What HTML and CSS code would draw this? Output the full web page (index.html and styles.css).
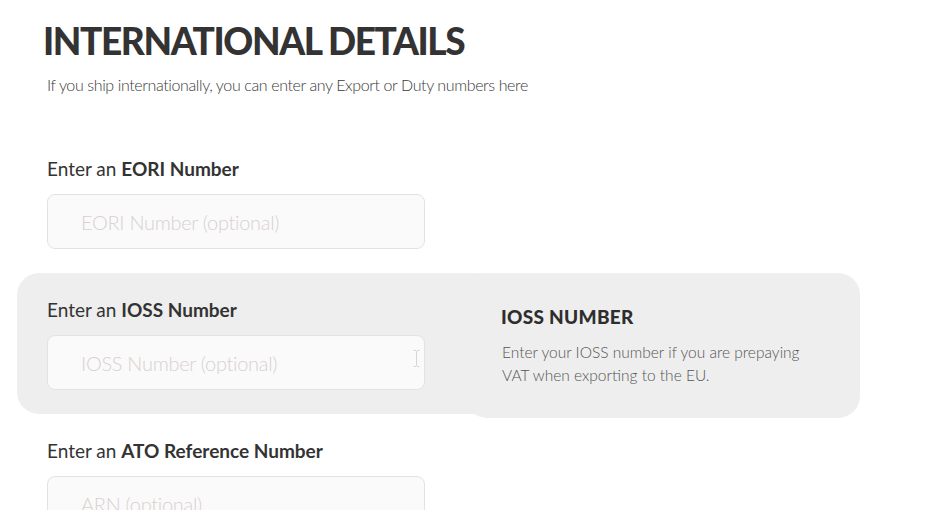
FILE: index.html
```html
<!DOCTYPE html>
<html lang="en">
<head>
<meta charset="utf-8">
<title>International Details</title>
<link rel="stylesheet" href="styles.css">
</head>
<body>
<main class="page">
  <header class="intro">
    <h1 class="title">INTERNATIONAL DETAILS</h1>
    <p class="subtitle">If you ship internationally, you can enter any Export or Duty numbers here</p>
  </header>

  <section class="fields">
    <div class="field">
      <label class="field-label" for="eori">Enter an <b>EORI Number</b></label>
      <input class="field-input" id="eori" type="text" placeholder="EORI Number (optional)">
    </div>

    <div class="field field-active">
      <label class="field-label" for="ioss">Enter an <b>IOSS Number</b></label>
      <div class="input-wrap">
        <input class="field-input" id="ioss" type="text" placeholder="IOSS Number (optional)">
        <svg class="cursor" width="7" height="17" viewBox="0 0 7 17" aria-hidden="true">
          <path d="M0.5 0.5h2.5M4 0.5h2.5M3.5 1v15M0.5 16.5h2.5M4 16.5h2.5" fill="none" stroke="#d6d6d6" stroke-width="1"/>
        </svg>
      </div>
      <aside class="tip">
        <h2 class="tip-title">IOSS NUMBER</h2>
        <p class="tip-text">Enter your IOSS number if you are prepaying VAT when exporting to the EU.</p>
      </aside>
    </div>

    <div class="field">
      <label class="field-label" for="arn">Enter an <b>ATO Reference Number</b></label>
      <input class="field-input" id="arn" type="text" placeholder="ARN (optional)">
    </div>
  </section>
</main>
</body>
</html>
```

FILE: styles.css
```css
* { box-sizing: border-box; }

html, body {
  margin: 0;
  padding: 0;
  background: #ffffff;
  height: 510px;
  overflow: hidden;
}

body {
  font-family: "Lato", "Noto Sans", sans-serif;
  color: #333333;
}

.page {
  padding-top: 19px;
}

.intro {
  padding-left: 43px;
}

.title {
  margin: 0;
  font-size: 37px;
  line-height: 44px;
  font-weight: 900;
  letter-spacing: -1.4px;
  color: #333333;
}

.subtitle {
  margin: 12px 0 0 4px;
  font-size: 16px;
  line-height: 20px;
  font-weight: 300;
  letter-spacing: -0.38px;
  color: #3a3a3a;
}

.fields {
  margin-top: 37px;
  margin-left: 17px;
  width: 843px;
  position: relative;
}

.field {
  position: relative;
  width: 470px;
  padding: 25px 30px 24px 30px;
  border-radius: 22px 0 0 22px;
}

.field-active {
  background: #eeeeee;
}

.field-label {
  display: block;
  font-size: 19px;
  line-height: 24px;
  font-weight: 400;
  color: #333333;
  margin-bottom: 13px;
}

.field-label b {
  font-weight: 700;
}

.input-wrap {
  position: relative;
  width: 378px;
}

.field-input {
  display: block;
  width: 378px;
  height: 55px;
  margin: 0;
  padding: 0 0 0 33px;
  border: 1px solid #e2e2e2;
  border-radius: 8px;
  background: #fafafa;
  font-family: "Lato", "Noto Sans", sans-serif;
  font-size: 20px;
  font-weight: 300;
  letter-spacing: -0.3px;
  color: #333333;
  outline: none;
}

.field-input::placeholder {
  color: #d9d0d0;
  opacity: 1;
}

.cursor {
  position: absolute;
  left: 366px;
  top: 15px;
}

.tip {
  position: absolute;
  left: 448px;
  top: 0;
  width: 395px;
  height: 145px;
  padding: 32px 36px 0 36px;
  background: #eeeeee;
  border-radius: 22px;
}

.tip-title {
  margin: 0;
  font-size: 19px;
  line-height: 24px;
  font-weight: 900;
  letter-spacing: 0.3px;
  color: #2e2e2e;
}

.tip-text {
  margin: 12px 0 0 1px;
  font-size: 15.5px;
  line-height: 23px;
  font-weight: 300;
  color: #555555;
  width: 320px;
}
```
